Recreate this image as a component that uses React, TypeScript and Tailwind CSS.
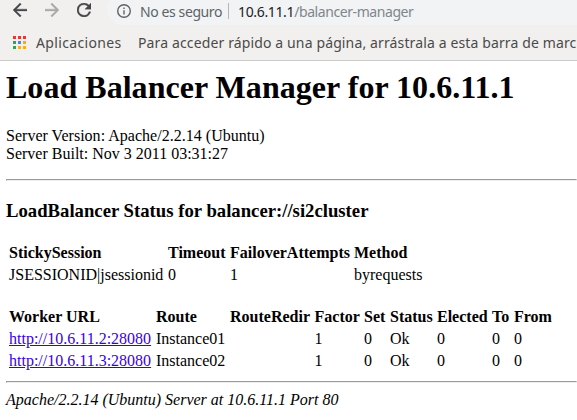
import React from "react";

const balancer = {
  head: ["StickySession", "Timeout", "FailoverAttempts", "Method"],
  widths: ["min-w-[157px]", "min-w-[60px]", "min-w-[122px]", "min-w-[71px]"],
  rows: [["JSESSIONID|jsessionid", "0", "1", "byrequests"]],
};

const workers = {
  head: ["Worker URL", "Route", "RouteRedir", "Factor", "Set", "Status", "Elected", "To", "From"],
  widths: [
    "min-w-[145px]",
    "min-w-[72px]",
    "min-w-[82.5px]",
    "min-w-[47.5px]",
    "min-w-[24px]",
    "min-w-[45px]",
    "min-w-[53px]",
    "min-w-[20px]",
    "min-w-[39px]",
  ],
  rows: [
    ["http://10.6.11.2:28080", "Instance01", "", "1", "0", "Ok", "0", "0", "0"],
    ["http://10.6.11.3:28080", "Instance02", "", "1", "0", "Ok", "0", "0", "0"],
  ],
};

function DataTable({ head, widths, rows }: { head: string[]; widths: string[]; rows: string[][] }) {
  return (
    <table className="border-separate border-spacing-[2px] whitespace-nowrap text-left">
      <thead>
        <tr>
          {head.map((h, i) => (
            <th key={h} className={`p-px font-bold ${widths[i]}`}>{h}</th>
          ))}
        </tr>
      </thead>
      <tbody>
        {rows.map((row) => (
          <tr key={row[0]}>
            {row.map((cell, i) => (
              <td key={i} className="p-px">
                {cell.startsWith("http") ? (
                  <a href="#" className="text-[#3a00e5] underline">{cell}</a>
                ) : (
                  cell
                )}
              </td>
            ))}
          </tr>
        ))}
      </tbody>
    </table>
  );
}

function Rule() {
  return <hr className="h-[2px] border border-r-[#eeeeee] border-b-[#eeeeee] border-l-[#9a9a9a] border-t-[#9a9a9a]" />;
}

function AppsGrid() {
  const colors = ["#ea3535", "#ea3535", "#ea3535", "#34a058", "#4285f4", "#f5ac10", "#34a058", "#fbb010", "#fbb010"];
  return (
    <svg className="shrink-0" width="13" height="13" viewBox="0 0 13 13" shapeRendering="crispEdges">
      {colors.map((c, i) => (
        <rect key={i} x={(i % 3) * 5} y={Math.floor(i / 3) * 5} width="3" height="3" fill={c} />
      ))}
    </svg>
  );
}

function Toolbar() {
  return (
    <div className="flex h-[25px] items-start overflow-hidden">
      <div className="flex shrink-0 gap-[18px] pl-[13px] pt-[3px]">
        <svg width="14" height="14" viewBox="4 4 16 16" fill="#45474a" stroke="#45474a" strokeWidth="0.4">
          <path d="M20 11H7.83l5.59-5.59L12 4l-8 8 8 8 1.41-1.41L7.83 13H20v-2z" />
        </svg>
        <svg width="14" height="14" viewBox="4 4 16 16" fill="#a9a8a7" stroke="#a9a8a7" strokeWidth="0.4">
          <path d="M4 11h12.17l-5.59-5.59L12 4l8 8-8 8-1.41-1.41L16.17 13H4v-2z" />
        </svg>
        <svg width="14" height="14" viewBox="4 4 16 16" fill="#45474a" stroke="#45474a" strokeWidth="0.4">
          <path d="M17.65 6.35A7.95 7.95 0 0 0 12 4a8 8 0 1 0 7.73 10h-2.08A6 6 0 1 1 12 6c1.66 0 3.14.69 4.22 1.78L13 11h7V4l-2.35 2.35z" />
        </svg>
      </div>
      <div className="ml-[16px] mt-[-7px] flex h-[32px] flex-1 items-center rounded-l-full bg-[#f1f3f4] pl-[10px] pt-[4px]">
        <svg className="shrink-0" width="14" height="14" viewBox="2 2 20 20" fill="#5f6368">
          <path d="M11 7h2v2h-2zm0 4h2v6h-2zm1-9a10 10 0 1 0 0 20 10 10 0 0 0 0-20zm0 18a8 8 0 1 1 0-16 8 8 0 0 1 0 16z" />
        </svg>
        <span className="ml-[9px] w-[88px] shrink-0 whitespace-nowrap text-[14px] tracking-[-0.4px] text-[#5f6368]">
          No es seguro
        </span>
        <span className="h-[16px] w-px shrink-0 bg-[#b4b7ba]" />
        <span className="ml-[9px] whitespace-nowrap text-[14px] text-[#202124]">
          <span className="tracking-[-0.35px]">10.6.11.1</span>
          <span className="tracking-[-0.42px] text-[#80868b]">/balancer-manager</span>
        </span>
      </div>
    </div>
  );
}

export default function App() {
  return (
    <div className="h-[420px] w-[577px] overflow-hidden bg-white">
      <header className="h-[61px] border-b border-[#cacaca] bg-[#f2f0ee] font-['Noto_Sans',sans-serif]">
        <Toolbar />
        <div className="flex h-[35px] items-center whitespace-nowrap pl-[13px] text-[14px] text-[#4a4a4a]">
          <AppsGrid />
          <span className="ml-[10px] w-[102px] shrink-0 tracking-[0.35px]">Aplicaciones</span>
          <span className="tracking-[0.13px]">Para acceder rápido a una página, arrástrala a esta barra de marc</span>
        </div>
      </header>
      <main className="pl-[6px] pt-[8px] font-['Liberation_Serif',serif] text-[16px] leading-[18px] text-black">
        <h1 className="mb-[21px] text-[32px] font-bold leading-[37px] tracking-[0.03px]">
          Load Balancer Manager for 10.6.11.1
        </h1>
        <dl className="mb-[16px]">
          <dt className="tracking-[0.02px]">Server Version: Apache/2.2.14 (Ubuntu)</dt>
          <dt>Server Built: Nov 3 2011 03:31:27</dt>
        </dl>
        <Rule />
        <h3 className="mb-[20px] mt-[19px] text-[18.72px] font-bold leading-[21px]">
          LoadBalancer Status for balancer://si2cluster
        </h3>
        <DataTable {...balancer} />
        <div className="h-[18px]" />
        <DataTable {...workers} />
        <div className="h-[8px]" />
        <Rule />
        <address className="mt-[8px] italic">Apache/2.2.14 (Ubuntu) Server at 10.6.11.1 Port 80</address>
      </main>
    </div>
  );
}
